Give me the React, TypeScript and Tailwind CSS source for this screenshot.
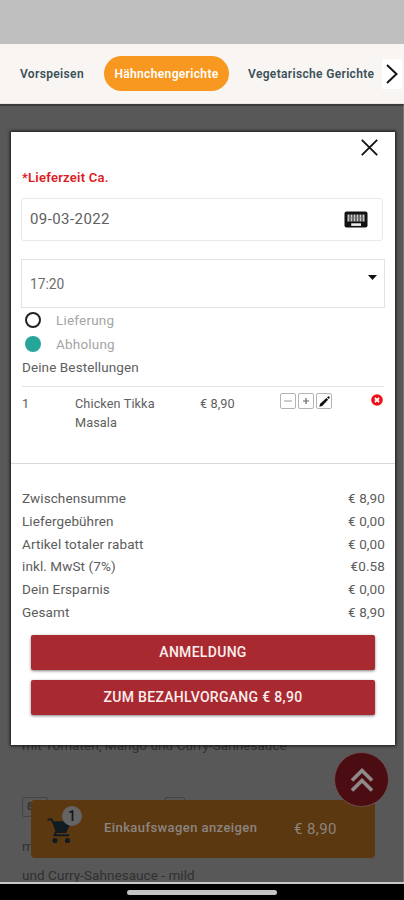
import { useState } from "react";

type SummaryRow = {
  label: string;
  value: string;
};

const categories = ["Vorspeisen", "Hähnchengerichte", "Vegetarische Gerichte"];

const summary: SummaryRow[] = [
  { label: "Zwischensumme", value: "€ 8,90" },
  { label: "Liefergebühren", value: "€ 0,00" },
  { label: "Artikel totaler rabatt", value: "€ 0,00" },
  { label: "inkl. MwSt (7%)", value: "€0.58" },
  { label: "Dein Ersparnis", value: "€ 0,00" },
  { label: "Gesamt", value: "€ 8,90" },
];

function CategoryNav() {
  return (
    <nav className="flex h-[60px] shrink-0 items-center border-b border-[#e9e6e3] bg-[#f8f5f2] pl-5 text-[12px] font-semibold text-[#3a5057]">
      <span className="w-[84px] shrink-0 tracking-[0.35px]">{categories[0]}</span>
      <span className="flex h-[35px] w-[125px] shrink-0 items-center justify-center rounded-full bg-[#f89820] tracking-[0.35px] text-white">
        {categories[1]}
      </span>
      <span className="ml-[19px] w-[127px] shrink-0 whitespace-nowrap tracking-[0.34px]">
        {categories[2]}
      </span>
      <button className="ml-[7px] flex h-[30px] w-[20px] shrink-0 items-center justify-center bg-white">
        <svg width="12" height="20" viewBox="0 0 12 20" fill="none" stroke="#151515" strokeWidth="2">
          <path d="M1 1l9.5 9L1 19" />
        </svg>
      </button>
    </nav>
  );
}

function DeliveryOption({
  label,
  checked,
  onSelect,
}: {
  label: string;
  checked: boolean;
  onSelect: () => void;
}) {
  return (
    <button
      onClick={onSelect}
      className="flex h-6 items-center gap-[15px] pl-[3px] text-[13.5px] tracking-[0.2px] text-[#a5a5a5]"
    >
      {checked ? (
        <span className="size-4 rounded-full bg-[#26a69a]" />
      ) : (
        <span className="size-4 rounded-full border-2 border-[#222]" />
      )}
      {label}
    </button>
  );
}

function OrderItem() {
  return (
    <div className="mt-[7px] flex h-[77px] items-start border-t border-[#e2e2e2] pt-[7px] text-[12.7px] leading-[19px] tracking-[0.1px] text-[#606060]">
      <span className="w-[53px]">1</span>
      <span className="w-[125px] pr-8">Chicken Tikka Masala</span>
      <span className="w-[80px]">€ 8,90</span>
      <span className="-mt-[1px] flex gap-[2px]">
        <button className="flex h-[16px] w-[16px] items-center justify-center rounded-[2px] border border-[#b4b4b4]">
          <svg width="8" height="8" viewBox="0 0 8 8" stroke="#999" strokeWidth="1">
            <path d="M0 4h8" />
          </svg>
        </button>
        <button className="flex h-[16px] w-[16px] items-center justify-center rounded-[2px] border border-[#b4b4b4]">
          <svg width="8" height="8" viewBox="0 0 8 8" stroke="#666" strokeWidth="1.2">
            <path d="M1 4h6M4 1v6" />
          </svg>
        </button>
        <button className="flex h-[16px] w-[16px] items-center justify-center rounded-[2px] border border-[#b4b4b4]">
          <svg width="11" height="11" viewBox="0 0 10 10" fill="#111">
            <path d="M0.3 9.7l0.7-2.6 5.8-5.3 1.5 1.6-5.5 5.6zM7.3 1.3l1-0.9q0.5-0.3 0.9 0.1l0.4 0.5q0.3 0.4 0 0.8l-0.8 1z" />
          </svg>
        </button>
      </span>
      <button className="mr-[1px] ml-auto">
        <svg width="12" height="12" viewBox="0 0 12 12">
          <circle cx="6" cy="6" r="5.8" fill="#ee1018" />
          <path d="M3.9 4l4.2 4M8.1 4L3.9 8" stroke="#fff" strokeWidth="1.9" />
        </svg>
      </button>
    </div>
  );
}

function CartModal() {
  const [mode, setMode] = useState("Abholung");

  return (
    <section className="absolute top-[28px] left-[11px] h-[613px] w-[384px] bg-white shadow-[0_0_3px_1px_rgba(0,0,0,0.75)]">
      <div className="flex h-[31px] justify-end pt-[7px] pr-[17px]">
        <svg width="17" height="17" viewBox="0 0 17 17" stroke="#151515" strokeWidth="1.9">
          <path d="M0.8 0.8l15.4 15.4M16.2 0.8L0.8 16.2" />
        </svg>
      </div>

      <div className="flex flex-col px-[11px]">
        <p className="mt-[5px] h-5 text-[13px] leading-5 font-semibold tracking-[0.25px] text-[#dc1a22]">
          *Lieferzeit Ca.
        </p>
        <div className="mt-[10px] -ml-[1px] mr-[1px] flex h-[43px] items-center justify-between rounded-[3px] border border-[#e9e9e9] pr-[14px] pl-2 text-[15px] tracking-[0.42px] text-[#606060]">
          09-03-2022
          <svg width="24" height="17" viewBox="0 0 24 17">
            <path
              d="M2.5 0.5h19q2 0 2 2v12q0 2-2 2h-19q-2 0-2-2v-12q0-2 2-2z"
              fill="#111"
            />
            <path
              d="M4.5 3.4v7M7.5 3.4v7M10.5 3.4v7M13.5 3.4v7M16.5 3.4v7M19.5 3.4v7"
              stroke="#c9c9c9"
              strokeWidth="2"
            />
            <path d="M4 6.9h16" stroke="#777" strokeWidth="0.6" />
            <path d="M7.2 13.6h9.8" stroke="#eee" strokeWidth="2.6" />
          </svg>
        </div>
        <div className="mt-[18px] -ml-[1px] -mr-[1px] flex h-[49px] justify-between border border-[#e2e2e2] pt-[14px] pr-[7px] pl-2 text-[13.8px] leading-[20px] text-[#6c6c6c]">
          17:20
          <svg className="mt-[1px]" width="9" height="5" viewBox="0 0 9 5" fill="#111">
            <path d="M0 0h9L4.5 5z" />
          </svg>
        </div>

        <DeliveryOption
          label="Lieferung"
          checked={mode === "Lieferung"}
          onSelect={() => setMode("Lieferung")}
        />
        <DeliveryOption
          label="Abholung"
          checked={mode === "Abholung"}
          onSelect={() => setMode("Abholung")}
        />
        <h2 className="h-[23px] text-[13.5px] leading-[23px] tracking-[0.1px] text-[#606060]">
          Deine Bestellungen
        </h2>

        <OrderItem />
      </div>

      <div className="border-t border-[#d9d9d9] pr-[10px] pl-[11px] pt-[23px]">
        {summary.map((row) => (
          <div
            key={row.label}
            className="flex h-[22.7px] items-center justify-between text-[13.5px] tracking-[0.1px] text-[#5c5c5c]"
          >
            <span>{row.label}</span>
            <span>{row.value}</span>
          </div>
        ))}
      </div>

      <div className="flex flex-col gap-[10px] px-5 pt-[12px] text-[14px] font-medium tracking-[0.3px] text-[#fbeeee]">
        <button className="h-[35px] rounded-[2px] bg-[#a92930] shadow-[0_1px_3px_rgba(0,0,0,0.5)]">
          ANMELDUNG
        </button>
        <button className="h-[35px] rounded-[2px] bg-[#a92930] shadow-[0_1px_3px_rgba(0,0,0,0.5)]">
          ZUM BEZAHLVORGANG € 8,90
        </button>
      </div>
    </section>
  );
}

function CartBar() {
  return (
    <div className="absolute top-[696px] left-[31px] flex h-[58px] w-[344px] items-center rounded-[4px] bg-[#5c3810] text-[#8b8580]">
      <div className="relative ml-4 h-[58px] w-[57px]">
        <svg className="absolute top-[18px] left-0" width="25" height="27" viewBox="0 0 25 27">
          <path
            d="M0.5 1.5h4l1.5 2.8h17L18.5 14H9l-1.5 3.2h14.7"
            fill="none"
            stroke="#101b21"
            strokeWidth="2"
          />
          <path d="M5 4h18l-4.4 10.2H9z" fill="#101b21" />
          <circle cx="8" cy="22.5" r="2.6" fill="#101b21" />
          <circle cx="20.5" cy="22.5" r="2.6" fill="#101b21" />
        </svg>
        <span className="absolute top-[6px] left-[15px] flex size-5 items-center justify-center rounded-full bg-[#646464] text-[14px] font-medium text-[#151515]">
          1
        </span>
      </div>
      <span className="w-[190px] pb-[3px] text-[13px] font-medium tracking-[0.42px]">
        Einkaufswagen anzeigen
      </span>
      <span className="text-[15px] tracking-[0.4px]">€ 8,90</span>
    </div>
  );
}

export default function App() {
  return (
    <div className="flex h-[900px] w-[404px] flex-col overflow-hidden bg-black font-[Roboto,sans-serif]">
      <header className="h-[44px] shrink-0 bg-[#bfbfbf]" />
      <CategoryNav />

      <main className="relative flex h-[778px] shrink-0 flex-col justify-end overflow-hidden border-t-2 border-r border-t-[#3b3b3b] border-r-[#777] bg-[#585858] pl-[22px] text-[13.5px] text-[#303030]">
        <p className="h-5 leading-5 tracking-[0.07px]">mit Tomaten, Mango und Curry-Sahnesauce</p>
        <div className="mt-[42px] flex w-[163px] justify-between text-[11px] font-bold">
          <span className="flex h-5 w-[26px] items-center rounded-[2px] border border-[#444] pl-1">
            8
          </span>
          <span className="h-5 w-5 rounded-[2px] border border-[#444]" />
        </div>
        <p className="mt-[19px] h-5 leading-5">mit Tomaten, Mango</p>
        <p className="mt-[9px] h-[17px] leading-5 tracking-[0.05px]">und Curry-Sahnesauce - mild</p>

        <div className="absolute -top-[2px] left-0">
          <CartBar />
          <div className="absolute top-[648px] left-[334px] flex size-[55px] items-center justify-center rounded-full border border-[#6a5050] bg-[#4b0d12]">
            <svg width="24" height="26" viewBox="0 0 24 26" fill="none" stroke="#8f8a8a" strokeWidth="3.6">
              <path d="M2 13.5l10-10 10 10M2 23.5l10-10 10 10" />
            </svg>
          </div>
          <CartModal />
        </div>
      </main>

      <footer className="flex h-[18px] shrink-0 justify-center border-t-2 border-[#c8c8c8] pt-[6px]">
        <span className="h-[5px] w-[150px] rounded-full bg-[#c4c4c4]" />
      </footer>
    </div>
  );
}
